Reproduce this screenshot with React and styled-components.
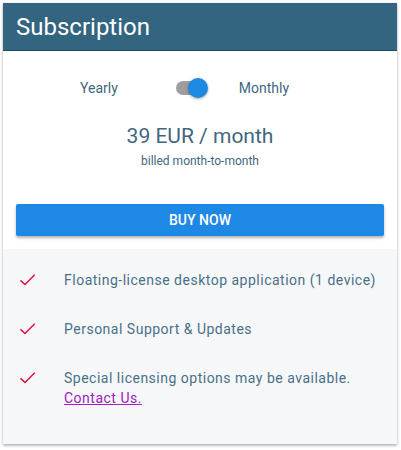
import React, { useState } from 'react'
import styled, { createGlobalStyle } from 'styled-components'

const GlobalStyle = createGlobalStyle`
  html, body {
    margin: 0;
    padding: 0;
    background: #ffffff;
    font-family: Roboto, "Liberation Sans", sans-serif;
  }
`

const FEATURES = [
  { id: 1, text: 'Floating-license desktop application (1 device)' },
  { id: 2, text: 'Personal Support & Updates' },
  { id: 3, text: 'Special licensing options may be available.', link: 'Contact Us.' },
]

function Check() {
  return (
    <CheckIcon viewBox="0 0 24 24">
      <path d="M2 12.5l6 5.5L21 5" fill="none" stroke="#e0103c" strokeWidth="2" />
    </CheckIcon>
  )
}

export default function App() {
  const [monthly, setMonthly] = useState(true)

  return (
    <>
      <GlobalStyle />
      <Page>
        <Card>
          <Header>
            <Title>Subscription</Title>
          </Header>
          <Body>
            <ToggleRow>
              <PeriodLabel>Yearly</PeriodLabel>
              <Switch onClick={() => setMonthly(!monthly)}>
                <Track $on={monthly} />
                <Thumb $on={monthly} />
              </Switch>
              <PeriodLabel>Monthly</PeriodLabel>
            </ToggleRow>
            <Price>{monthly ? '39 EUR / month' : '390 EUR / year'}</Price>
            <Billed>{monthly ? 'billed month-to-month' : 'billed yearly'}</Billed>
            <BuyButton>Buy now</BuyButton>
          </Body>
          <Features>
            {FEATURES.map(({ id, text, link }) => (
              <Feature key={id}>
                <Check />
                <FeatureText>
                  {text}
                  {link && (
                    <>
                      <br />
                      <ContactLink href="#">{link}</ContactLink>
                    </>
                  )}
                </FeatureText>
              </Feature>
            ))}
          </Features>
        </Card>
      </Page>
    </>
  )
}

const Page = styled.div`
  padding: 3px 4px 6px 3px;
`

const Card = styled.div`
  background: #ffffff;
  box-shadow: 0 1px 3px rgba(0, 0, 0, 0.25), 0 2px 2px rgba(0, 0, 0, 0.12);
  display: flex;
  flex-direction: column;
`

const Header = styled.div`
  height: 47px;
  background: #336580;
  border-bottom: 1px solid #1f4a62;
  display: flex;
  align-items: center;
  padding: 0 13px;
`

const Title = styled.h1`
  margin: 0;
  font-size: 24px;
  font-weight: 400;
  color: #ffffff;
`

const Body = styled.div`
  display: flex;
  flex-direction: column;
  align-items: center;
  padding: 22px 13px 13px;
`

const ToggleRow = styled.div`
  align-self: flex-start;
  margin-left: 64px;
  display: flex;
  align-items: center;
  height: 30px;
`

const PeriodLabel = styled.span`
  font-size: 14px;
  color: #3f6780;
`

const Switch = styled.div`
  position: relative;
  width: 34px;
  height: 24px;
  margin: 0 30px 0 57px;
  cursor: pointer;
`

const Track = styled.div`
  position: absolute;
  left: 1px;
  top: 5px;
  width: 30px;
  height: 14px;
  border-radius: 7px;
  background: ${p => (p.$on ? '#9e9e9e' : '#bdbdbd')};
`

const Thumb = styled.div`
  position: absolute;
  top: 2px;
  left: ${p => (p.$on ? '13px' : '0')};
  width: 20px;
  height: 20px;
  border-radius: 50%;
  background: ${p => (p.$on ? '#1e88e5' : '#fafafa')};
  box-shadow: 0 1px 3px rgba(0, 0, 0, 0.35);
`

const Price = styled.div`
  margin-top: 21px;
  font-size: 21px;
  color: #3f6780;
`

const Billed = styled.div`
  margin-top: 6px;
  font-size: 12px;
  color: #3f6780;
`

const BuyButton = styled.button`
  margin-top: 36px;
  align-self: stretch;
  height: 32px;
  border: none;
  border-radius: 2px;
  background: #1e88e5;
  color: #ffffff;
  font-family: Roboto, "Liberation Sans", sans-serif;
  font-size: 14px;
  font-weight: 500;
  text-transform: uppercase;
  box-shadow: 0 2px 3px rgba(0, 0, 0, 0.3);
  cursor: pointer;
`

const Features = styled.ul`
  list-style: none;
  margin: 0;
  padding: 21px 16px 36px 16px;
  background: #f5f7f9;
  display: flex;
  flex-direction: column;
  gap: 29px;
`

const Feature = styled.li`
  display: flex;
  align-items: flex-start;
  gap: 27px;
`

const CheckIcon = styled.svg`
  width: 18px;
  height: 18px;
  flex: none;
  margin-top: 1px;
`

const FeatureText = styled.div`
  font-size: 14px;
  letter-spacing: 0.5px;
  line-height: 20px;
  color: #4a7089;
`

const ContactLink = styled.a`
  color: #a020c0;
  text-decoration: underline;
`
